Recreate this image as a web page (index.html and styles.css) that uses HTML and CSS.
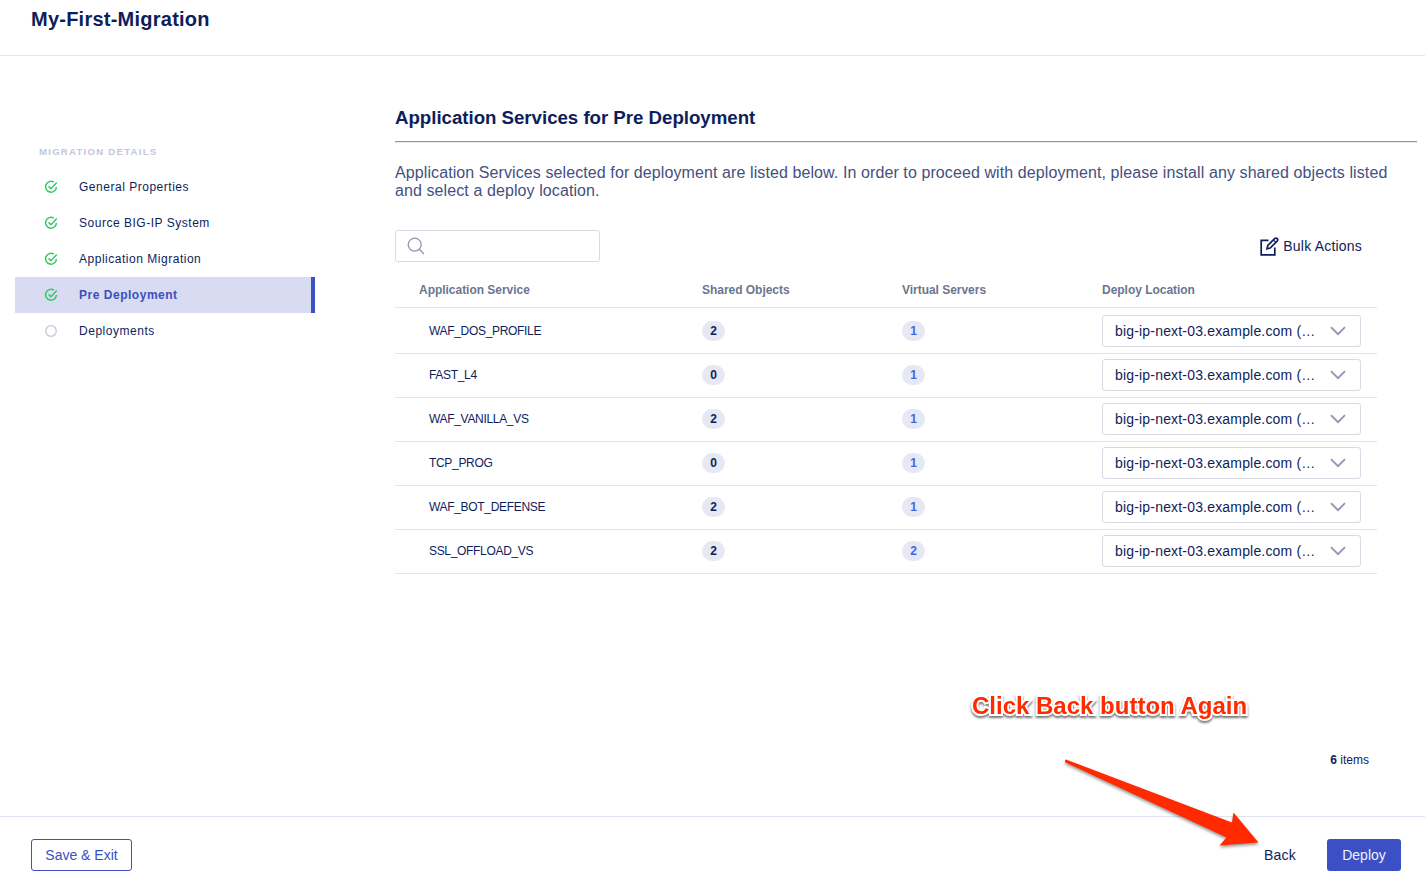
FILE: index.html
```html
<!DOCTYPE html>
<html lang="en">
<head>
<meta charset="utf-8">
<title>My-First-Migration</title>
<link rel="stylesheet" href="styles.css">
</head>
<body>
<svg class="defs" width="0" height="0" aria-hidden="true">
  <symbol id="check" viewBox="0 0 14 14"><path d="M9.8 2.1A5.4 5.4 0 1 0 12.4 7M4.6 6.4 6.9 8.7 12.8 2.6" fill="none" stroke="#2fcb62" stroke-width="1.5"/></symbol>
  <symbol id="chevron" viewBox="0 0 16 10"><path d="M1 1.2 8 8.2 15 1.2" fill="none" stroke="#8f94b5" stroke-width="1.8"/></symbol>
</svg>
<div class="page">
  <header class="header"><h1 class="header-title">My-First-Migration</h1></header>
  <div class="body">
    <nav class="sidebar">
      <div class="sidebar-title">MIGRATION DETAILS</div>
      <a class="step"><svg class="step-icon"><use href="#check"/></svg><span>General Properties</span></a>
      <a class="step"><svg class="step-icon"><use href="#check"/></svg><span>Source BIG-IP System</span></a>
      <a class="step"><svg class="step-icon"><use href="#check"/></svg><span>Application Migration</span></a>
      <a class="step active"><svg class="step-icon"><use href="#check"/></svg><span>Pre Deployment</span></a>
      <a class="step"><svg class="step-icon" viewBox="0 0 14 14"><circle cx="7" cy="7" r="5.3" fill="none" stroke="#c3c6d8" stroke-width="1.3"/></svg><span>Deployments</span></a>
    </nav>
    <main class="main">
      <h2 class="title">Application Services for Pre Deployment</h2>
      <p class="intro">Application Services selected for deployment are listed below. In order to proceed with deployment, please install any shared objects listed<br>and select a deploy location.</p>
      <div class="toolbar">
        <div class="search"><svg width="18" height="18" viewBox="0 0 18 18" fill="none" stroke="#8f94b5" stroke-width="1.3"><circle cx="7.7" cy="7.7" r="6.5"/><path d="M12.3 12.3 17 17"/></svg></div>
        <div class="bulk"><svg width="19" height="19" viewBox="0 0 19 19" fill="none" stroke="#0e1e5b"><path d="M8.5 3.4H1.2V17.8H14.8V10.5" stroke-width="1.7"/><path d="M7 11.8 7.8 8.5 14.6 1.7Q16 .4 17.2 1.6 18.4 2.8 17.1 4.2L10.2 11Z" stroke-width="1.7"/><path d="M13.4 3 15.8 5.4" stroke-width="1.1"/></svg><span>Bulk Actions</span></div>
      </div>
      <div class="table">
        <div class="row head"><span class="service">Application Service</span><span>Shared Objects</span><span>Virtual Servers</span><span>Deploy Location</span></div>
        <div class="row first"><span class="name">WAF_DOS_PROFILE</span><b class="badge">2</b><b class="badge link">1</b><div class="select"><span>big-ip-next-03.example.com (…</span><svg width="16" height="10"><use href="#chevron"/></svg></div></div>
        <div class="row"><span class="name">FAST_L4</span><b class="badge">0</b><b class="badge link">1</b><div class="select"><span>big-ip-next-03.example.com (…</span><svg width="16" height="10"><use href="#chevron"/></svg></div></div>
        <div class="row"><span class="name">WAF_VANILLA_VS</span><b class="badge">2</b><b class="badge link">1</b><div class="select"><span>big-ip-next-03.example.com (…</span><svg width="16" height="10"><use href="#chevron"/></svg></div></div>
        <div class="row"><span class="name">TCP_PROG</span><b class="badge">0</b><b class="badge link">1</b><div class="select"><span>big-ip-next-03.example.com (…</span><svg width="16" height="10"><use href="#chevron"/></svg></div></div>
        <div class="row"><span class="name">WAF_BOT_DEFENSE</span><b class="badge">2</b><b class="badge link">1</b><div class="select"><span>big-ip-next-03.example.com (…</span><svg width="16" height="10"><use href="#chevron"/></svg></div></div>
        <div class="row"><span class="name">SSL_OFFLOAD_VS</span><b class="badge">2</b><b class="badge link">2</b><div class="select"><span>big-ip-next-03.example.com (…</span><svg width="16" height="10"><use href="#chevron"/></svg></div></div>
      </div>
      <div class="count"><b>6</b> items</div>
    </main>
  </div>
  <footer class="footer">
    <button class="btn outline">Save &amp; Exit</button>
    <div class="actions"><button class="btn text">Back</button><button class="btn primary">Deploy</button></div>
  </footer>
  <div class="callout">Click Back button Again</div>
  <svg class="arrow" width="210" height="100" viewBox="1055 752 210 100"><path d="M1066 759.6 1232 822.5 1233.5 812.5 1258.5 842.5 1219.5 845.5 1226.5 837.5 1065.5 762.5Q1064.200 760 1066 759.6Z" fill="#ff2a00"/></svg>
</div>
</body>
</html>
```
FILE: styles.css
```css
* { box-sizing: border-box; }
body { margin: 0; background: #fff; color: #0e1e5b; font-family: "Liberation Sans", Arial, sans-serif; }
.defs { position: absolute; }
.page { position: relative; width: 1425px; height: 894px; display: flex; flex-direction: column; overflow: hidden; }
.header { height: 56px; padding: 7px 31px 0; border-bottom: 1px solid #e4e5f0; }
.header-title { margin: 0; font-size: 20px; line-height: 24px; letter-spacing: .24px; }
.body { flex: 1; display: flex; min-height: 0; }
.sidebar { width: 315px; padding: 88px 0 0 15px; }
.sidebar-title { height: 25px; padding-left: 24px; font-size: 9.6px; line-height: 16px; font-weight: bold; letter-spacing: 1.25px; color: #c3c6d8; }
.step { display: flex; align-items: center; height: 36px; padding-left: 29px; font-size: 12px; letter-spacing: .52px; }
.step-icon { width: 14px; height: 14px; margin-right: 21px; }
.active { background: #d8dbf1; border-right: 4px solid #3a50c4; color: #3a4fbd; font-weight: bold; }
.main { width: 1022px; margin-left: 80px; padding-top: 49px; }
.title { height: 38px; margin: 0; border-bottom: 1px solid #e5e5e5; box-shadow: inset 0 -1px #999; font-size: 18.7px; line-height: 26px; letter-spacing: -.03px; }
.intro { margin: 21px 0 0; height: 66px; font-size: 16px; line-height: 18px; letter-spacing: .094px; color: #45507f; white-space: nowrap; }
.toolbar { display: flex; justify-content: space-between; width: 967px; height: 42px; }
.search { width: 205px; height: 32px; padding: 6px 11px; border: 1px solid #d8dae6; border-radius: 3px; }
.bulk { display: flex; align-items: center; gap: 4px; height: 32px; font-size: 14px; letter-spacing: .2px; }
.table { width: 982px; }
.row { display: grid; grid-template-columns: 307px 200px 200px 259px; align-items: center; height: 44px; padding-bottom: 1px; border-bottom: 1px solid #e2e3ee; font-size: 12px; }
.head { height: 36px; padding-bottom: 0; color: #6b7690; font-weight: bold; letter-spacing: -.03px; }
.service { padding-left: 24px; }
.first { height: 46px; padding: 1px 0 0; }
.name { padding-left: 34px; letter-spacing: -.32px; }
.badge { display: flex; align-items: center; justify-content: center; width: 23px; height: 20px; border-radius: 10px; background: #e6e8f4; }
.link { color: #4267e8; }
.select { display: flex; align-items: center; justify-content: space-between; height: 32px; padding: 0 14px 0 12px; border: 1px solid #d8dae6; border-radius: 3px; font-size: 14px; letter-spacing: .18px; }
.count { margin-top: 178px; padding-right: 48px; text-align: right; font-size: 12px; line-height: 16px; }
.footer { display: flex; align-items: center; justify-content: space-between; height: 78px; padding: 0 24px 1px 31px; border-top: 1px solid #e0e2f5; }
.actions { display: flex; gap: 16px; }
.btn { height: 32px; padding: 0; border: 0; border-radius: 3px; background: none; color: inherit; font: 14px "Liberation Sans", Arial, sans-serif; }
.outline { width: 101px; border: 1px solid #3a50c4; color: #3a50c4; }
.text { width: 62px; letter-spacing: .2px; }
.primary { width: 74px; background: #3b50c4; color: #eef0ff; }
.callout { position: absolute; left: 972px; top: 691px; font-size: 24px; line-height: 30px; font-weight: bold; white-space: nowrap; color: #ff2a00; -webkit-text-stroke: 4px #fff; paint-order: stroke fill; filter: drop-shadow(0 2px 1px #0008); }
.arrow { position: absolute; left: 1055px; top: 752px; filter: drop-shadow(0 2px 1.5px #0006); }
```
